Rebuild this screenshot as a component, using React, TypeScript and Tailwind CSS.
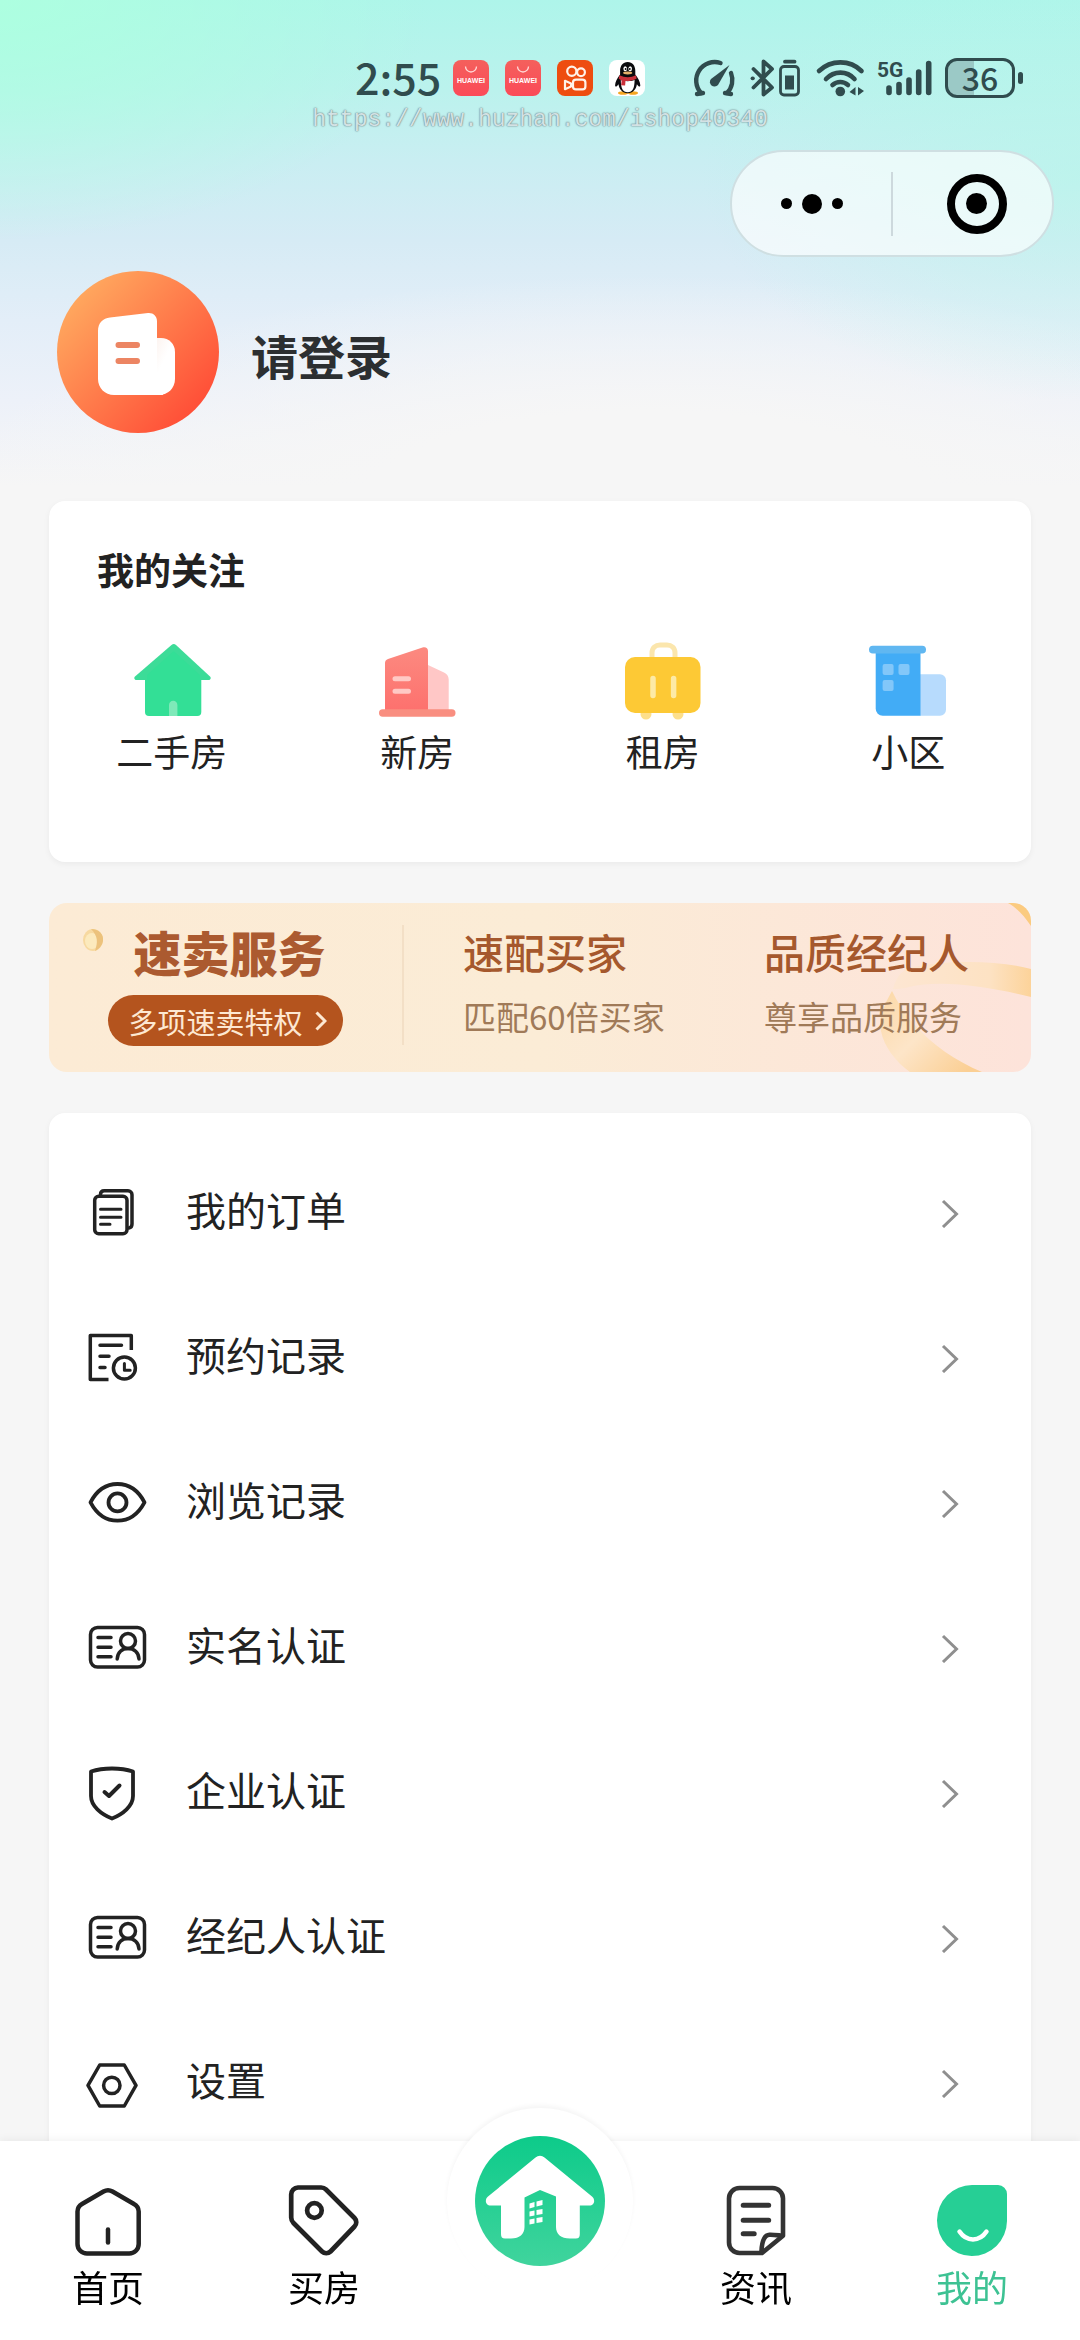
import React, { useState } from 'react';

type TabId = 'home' | 'buy' | 'publish' | 'news' | 'mine';

/* ---------- status bar icons ---------- */

function HuaweiIcon() {
  return (
    <svg className="w-9 h-9" viewBox="0 0 36 36" aria-hidden="true">
      <defs>
        <linearGradient id="hw" x1="0" y1="0" x2="0" y2="1">
          <stop offset="0" stopColor="#f4605c" />
          <stop offset="1" stopColor="#fb4a58" />
        </linearGradient>
      </defs>
      <rect width="36" height="36" rx="8" fill="url(#hw)" />
      <path d="M12.5 6.5a5.5 5.5 0 0 0 11 0" fill="none" stroke="#ffd9d6" strokeWidth="1.3" />
      <text
        x="18"
        y="23"
        textAnchor="middle"
        fill="#fff"
        className="font-['Liberation_Sans',sans-serif] text-[7px] font-bold"
      >
        HUAWEI
      </text>
    </svg>
  );
}

function KuaishouIcon() {
  return (
    <svg className="w-9 h-9" viewBox="0 0 36 36" aria-hidden="true">
      <rect width="36" height="36" rx="8" fill="#ee4d10" />
      <g fill="none" stroke="#fff3ea" strokeWidth="2.2" strokeLinejoin="round">
        <circle cx="14.8" cy="11.3" r="4.6" />
        <circle cx="24" cy="12.2" r="3.9" />
        <rect x="16" y="19.6" width="12.4" height="9.8" rx="3" />
        <path d="M8 20.8v8.4l6-2.6v-3.2z" />
      </g>
    </svg>
  );
}

function QQIcon() {
  return (
    <svg className="w-9 h-9" viewBox="0 0 36 36" aria-hidden="true">
      <rect width="36" height="36" rx="8" fill="#fff" />
      <ellipse cx="14" cy="33" rx="5" ry="1.8" fill="#f5a623" />
      <ellipse cx="24" cy="33" rx="5" ry="1.8" fill="#f5a623" />
      <path
        d="M18.7 2c4.8 0 7.6 3.8 7.6 9v3.5c2.8 3.6 5 7.5 5 10.8 0 1.7-1.4 2-3.4-1-.6 4.8-4 9-9.2 9s-8.6-4.2-9.2-9c-2 3-3.4 2.7-3.4 1 0-3.3 2.2-7.2 5-10.8V11c0-5.2 2.8-9 7.6-9z"
        fill="#0b0b0e"
      />
      <path d="M11.8 20c0 8 2 12.3 6.9 12.3S25.600 28 25.600 20c-4 1.600-9.800 1.600-13.800 0z" fill="#fff" />
      <path d="M10.500 15.300c5 2.500 11.500 2.500 16.400 0l.8 3.200c-3.200 1.900-7.200 2.700-11.200 2.600l-.4 4.500-4-.4.6-4.800c-1.400-.5-2.200-1.200-3-2z" fill="#c9303a" />
      <ellipse cx="16.2" cy="8.8" rx="1.8" ry="2.5" fill="#fff" />
      <ellipse cx="21.2" cy="8.8" rx="1.8" ry="2.5" fill="#fff" />
      <circle cx="16.6" cy="9" r=".9" />
      <circle cx="20.8" cy="9" r=".9" />
      <ellipse cx="18.7" cy="13" rx="4.6" ry="1.4" fill="#e5b06a" />
    </svg>
  );
}

function GaugeIcon() {
  return (
    <svg className="w-[46px] h-10" viewBox="0 0 46 40" fill="none" stroke="currentColor" strokeWidth="4.4" strokeLinecap="round" aria-hidden="true">
      <path d="M10 35A18.500 18.500 0 0 1 29.500 5" />
      <path d="M40 15a18.500 18.500 0 0 1-4 20" />
      <path d="M6 36l6-1M40 36l-6-1" />
      <path d="M38.500 7L27 27a4.600 4.600 0 1 1-7-6z" fill="currentColor" stroke="none" />
    </svg>
  );
}

function BluetoothIcon() {
  return (
    <svg className="w-[54px] h-10" viewBox="0 0 54 40" fill="none" stroke="currentColor" strokeWidth="3.8" strokeLinecap="round" strokeLinejoin="round" aria-hidden="true">
      <path d="M4.500 11L23 29.500 14.500 36.500V3.500L23 11 4.500 29.500" />
      <path d="M3.500 20.300h.4" />
      <rect x="31.5" y="8.5" width="18" height="28.5" rx="3.5" strokeWidth="2.8" />
      <path d="M36 3.700h9.500" />
      <rect x="36" y="17.5" width="9" height="14" fill="currentColor" stroke="none" />
    </svg>
  );
}

function WifiIcon() {
  return (
    <svg className="w-[50px] h-10" viewBox="0 0 50 40" fill="none" stroke="currentColor" strokeWidth="4.6" strokeLinecap="round" aria-hidden="true">
      <path d="M4 13C16 1.500 35 1.500 46.500 13" />
      <path d="M11 21c8-8.500 21-8.500 28.500 0" />
      <path d="M17.500 27c4.500-4 11-4 15.500 0" />
      <circle cx="25.3" cy="33.5" r="4.8" fill="currentColor" stroke="none" />
      <path d="M40.500 29v8.500L34.500 34zM43 29v8.500l6-4.500z" fill="currentColor" stroke="none" />
    </svg>
  );
}

function SignalIcon() {
  return (
    <svg className="w-14 h-10" viewBox="0 0 56 40" fill="none" stroke="currentColor" strokeWidth="5.6" strokeLinecap="round" aria-hidden="true">
      <text x="0" y="19" fill="currentColor" stroke="none" className="font-['Roboto',sans-serif] text-[21px] font-bold">
        5G
      </text>
      <path d="M12 30v4.500M22 26.500v8M32 22v12.500M41.700 14v20.500M51.700 5.500v29" />
    </svg>
  );
}

function StatusBar() {
  return (
    <div className="flex h-10 items-center justify-between pl-[355px] pr-[57px] text-[#304c4e]">
      <div className="flex items-center gap-4">
        <span className="w-[82px] pb-1 text-[43px] leading-10 font-medium whitespace-nowrap">2:55</span>
        <HuaweiIcon />
        <HuaweiIcon />
        <KuaishouIcon />
        <QQIcon />
      </div>
      <div className="flex items-center gap-3">
        <GaugeIcon />
        <BluetoothIcon />
        <WifiIcon />
        <SignalIcon />
        <div className="flex items-center gap-[3px]">
          <div className="flex h-10 w-[70px] items-center justify-center rounded-xl border-[3px] border-current bg-linear-to-r from-[#9bc9c6] from-40% to-transparent to-40% pb-[2px] text-[32px] leading-8 font-medium">
            36
          </div>
          <div className="h-3 w-[5px] rounded-full bg-current" />
        </div>
      </div>
    </div>
  );
}

/* ---------- 我的关注 icons ---------- */

function SecondHandIcon() {
  return (
    <svg className="size-[84px]" viewBox="0 0 84 84" aria-hidden="true">
      <path d="M15 32h56.300v39a4 4 0 0 1-4 4H19a4 4 0 0 1-4-4z" fill="#33df96" />
      <path d="M41.500 4a3.500 3.500 0 0 1 4.500 0l34 31.500c1.500 1.500.5 3.500-1.500 3.500H6.500c-2 0-3-2-1.500-3.500z" fill="#3cdc98" />
      <path d="M43.700 10L70 34v8H17v-8z" fill="#33df96" />
      <path d="M39 75V64a4.200 4.200 0 0 1 8.400 0v11z" fill="#7fe9b9" />
    </svg>
  );
}

function NewHouseIcon() {
  return (
    <svg className="size-[84px]" viewBox="0 0 84 84" aria-hidden="true">
      <defs>
        <linearGradient id="nh" x1="0" y1="0" x2="0" y2="1">
          <stop offset="0" stopColor="#fc8a80" />
          <stop offset="1" stopColor="#fd716e" />
        </linearGradient>
      </defs>
      <path d="M53 24l16 7.500a8 8 0 0 1 4.700 7V69H53z" fill="#ffc7c6" />
      <path d="M10 22c0-2 1-3.300 3-4l34.500-11.500c3-1 5.500.5 5.500 3.500v59H10z" fill="url(#nh)" />
      <rect x="4" y="68.3" width="76.5" height="7.5" rx="3.7" fill="#f98e80" />
      <path d="M20 37.700h13.500M20 50.300h13.500" stroke="#ffc9c5" strokeWidth="5" strokeLinecap="round" />
    </svg>
  );
}

function RentIcon() {
  return (
    <svg className="size-[84px]" viewBox="0 0 84 84" aria-hidden="true">
      <path d="M31 18v-6c0-5 3.500-8 8-8h7c4.500 0 8 3 8 8v6" fill="none" stroke="#fbe6ad" strokeWidth="5" />
      <circle cx="25" cy="73" r="5.5" fill="#fddf8b" />
      <circle cx="57" cy="73" r="5.5" fill="#fddf8b" />
      <rect x="4" y="16" width="75.5" height="56" rx="10" fill="#fdc935" />
      <path d="M32 37.500v17M52.600 37.500v17" stroke="#fdeaa6" strokeWidth="5.5" strokeLinecap="round" />
    </svg>
  );
}

function CommunityIcon() {
  return (
    <svg className="size-[84px]" viewBox="0 0 84 84" aria-hidden="true">
      <path d="M54 33.300h20a6 6 0 0 1 6 6v29.500a6 6 0 0 1-6 6H54z" fill="#b7dbfd" />
      <path d="M9.700 10h44.800v64.800H16.700a7 7 0 0 1-7-7z" fill="#42acf6" />
      <rect x="3" y="4.8" width="57" height="7.8" rx="3.8" fill="#60b7f1" />
      <g fill="#82c7f9">
        <rect x="16.6" y="23" width="11" height="11" rx="2" />
        <rect x="32.5" y="23" width="11" height="11" rx="2" />
        <rect x="16.6" y="39" width="11" height="11" rx="2" />
      </g>
    </svg>
  );
}

/* ---------- list icons ---------- */

function LineIcon({ children }: { children: React.ReactNode }) {
  return (
    <svg
      className="h-[60px] w-[62px] flex-shrink-0"
      viewBox="-2 0 62 60"
      fill="none"
      stroke="currentColor"
      strokeWidth="3.5"
      strokeLinecap="round"
      strokeLinejoin="round"
      aria-hidden="true"
    >
      {children}
    </svg>
  );
}

const OrderIcon = () => (
  <LineIcon>
    <rect x="6.7" y="14.3" width="32.3" height="37.4" rx="4" />
    <path d="M12.500 12.500c0-2.500 1.500-3.800 3.800-3.800H40a4 4 0 0 1 4 4V42c0 2.500-1 3.700-3 3.900" />
    <path d="M12.500 27.300H33M12.500 35.300H33M12.500 42.200h9.500" strokeWidth="3" />
  </LineIcon>
);

const BookingIcon = () => (
  <LineIcon>
    <path d="M43.300 23V8.500h-41v44H20.500" strokeLinecap="butt" />
    <path d="M12 18.200h21.500M12 29.200h9M12 40.500h5" />
    <circle cx="36.4" cy="41" r="11" />
    <path d="M36.400 36.500v6.700h5.800" strokeWidth="3" />
  </LineIcon>
);

const EyeIcon = () => (
  <LineIcon>
    <path d="M2.500 30.300C9 18 18.500 12 29.500 12S50 18 56.500 30.300C50 42.500 40.500 48.700 29.500 48.700S9 42.500 2.500 30.300z" strokeWidth="3.8" />
    <circle cx="29.5" cy="30.4" r="9" strokeWidth="3.8" />
  </LineIcon>
);

const IdCardIcon = () => (
  <LineIcon>
    <rect x="2.5" y="10.5" width="54" height="39.5" rx="7" />
    <path d="M10 20.500h13M10 30.300h13M10 39.800h13" />
    <circle cx="40" cy="24" r="7.5" />
    <path d="M29.200 42c.3-6.500 4.800-10.500 10.800-10.500S50.700 35.500 51 42" />
  </LineIcon>
);

const ShieldIcon = () => (
  <LineIcon>
    <path d="M3 9.500C15 5.500 33 5.500 45 9.500V34c0 10-10 18-21 22.500C13 52 3 44 3 34z" strokeWidth="3.8" />
    <path d="M16.500 30l4.500 4 10.500-10.500" strokeWidth="4" />
  </LineIcon>
);

const SettingIcon = () => (
  <LineIcon>
    <path d="M11.700 13h24.600L48 33.400 36.300 54H11.700L0 33.400z" />
    <circle cx="23.8" cy="33.4" r="8.2" />
  </LineIcon>
);

/* ---------- tab icons ---------- */

const HomeTabIcon = () => (
  <svg className="size-[72px]" viewBox="0 0 72 72" fill="none" stroke="#222" strokeWidth="4.5" strokeLinecap="round" strokeLinejoin="round" aria-hidden="true">
    <path d="M31.500 6.500a9 9 0 0 1 9 0L62 19a9 9 0 0 1 4.700 7.500V59a9.500 9.500 0 0 1-9.500 9.500H15A9.500 9.500 0 0 1 5.500 59V26.500A9 9 0 0 1 10 19z" />
    <path d="M36 44.500v13" />
  </svg>
);

const BuyTabIcon = () => (
  <svg className="size-[72px]" viewBox="0 0 72 72" fill="none" stroke="#222" strokeWidth="4.7" strokeLinejoin="round" aria-hidden="true">
    <path d="M10 2.500h23a7 7 0 0 1 5 2l28.500 28.500a6 6 0 0 1 0 8.500L42.500 66.500a6 6 0 0 1-8.500 0L5.500 38a8 8 0 0 1-2.300-5.500V9.500a7 7 0 0 1 6.800-7z" />
    <circle cx="26.4" cy="25.5" r="7.3" />
  </svg>
);

const NewsTabIcon = () => (
  <svg className="size-[72px]" viewBox="0 0 72 72" fill="none" stroke="#333" strokeWidth="4.6" strokeLinecap="round" strokeLinejoin="round" aria-hidden="true">
    <path d="M63 50.700V13.500A10.500 10.500 0 0 0 52.500 3h-33A10.500 10.500 0 0 0 9 13.500v44A10.500 10.500 0 0 0 19.500 68H42z" />
    <path d="M41.500 66c.5-11 3-16 8-16.300 4-.2 8.500.6 12 1" />
    <path d="M23.200 20.300h25.500M23.200 35.300h25.500M23.200 48.700h11" strokeWidth="5" />
  </svg>
);

const MineTabIcon = () => (
  <svg className="size-[72px]" viewBox="0 0 72 72" fill="none" aria-hidden="true">
    <path d="M36 0h26a9 9 0 0 1 9 9v27a35 35.500 0 1 1-35-36z" fill="#26cf95" />
    <path d="M23.500 46.500c7 10.500 20 10.500 27 0" stroke="#fff" strokeWidth="4.5" strokeLinecap="round" />
  </svg>
);

function PublishIcon() {
  return (
    <svg className="size-[130px]" viewBox="0 0 130 130" aria-hidden="true">
      <defs>
        <linearGradient id="pub" x1="0" y1="0" x2="0" y2="1">
          <stop offset="0" stopColor="#0dcb8a" />
          <stop offset="1" stopColor="#40d49d" />
        </linearGradient>
      </defs>
      <circle cx="65" cy="65" r="65" fill="url(#pub)" />
      <path
        d="M60.500 21.500a7 7 0 0 1 9 0L117 60.500c4 3.500 2 9-2.500 9h-9.700V98c0 3-1 4.500-4 4.500h-6C86 102.500 81 98 81 91V60.500L65 54 49.500 61.500V91c0 7-5 11.500-13.500 11.500h-6c-3 0-4-1.500-4-4.500V69.500h-10.500c-4.500 0-6.500-5.500-2.500-9z"
        fill="#fff"
      />
      <g fill="#fff">
        <path d="M54.500 67.500l5-1.500v5l-5 1.500zM61.500 65.500l6-1.500v5l-6 1.500zM54.500 75.500l5-1v5l-5 1zM61.500 74l6-1v5l-6 1zM54.500 83.500l5-1v5l-5 1zM61.500 82l6-1v5l-6 1z" />
      </g>
    </svg>
  );
}

/* ---------- data ---------- */

const follows = [
  { label: '二手房', icon: SecondHandIcon },
  { label: '新房', icon: NewHouseIcon },
  { label: '租房', icon: RentIcon },
  { label: '小区', icon: CommunityIcon },
];

const menuItems = [
  { label: '我的订单', icon: OrderIcon },
  { label: '预约记录', icon: BookingIcon },
  { label: '浏览记录', icon: EyeIcon },
  { label: '实名认证', icon: IdCardIcon },
  { label: '企业认证', icon: ShieldIcon },
  { label: '经纪人认证', icon: IdCardIcon },
  { label: '设置', icon: SettingIcon },
];

/* ---------- sections ---------- */

function Capsule() {
  return (
    <div className="flex h-[107px] w-[324px] items-center rounded-full border-2 border-[#cfdfe2] bg-white/65">
      <button type="button" aria-label="更多" className="flex h-full flex-1 items-center justify-center gap-[10px]">
        <span className="size-[11px] rounded-full bg-black" />
        <span className="size-5 rounded-full bg-black" />
        <span className="size-[11px] rounded-full bg-black" />
      </button>
      <span className="h-16 w-[2px] bg-[#cdd9dd]" />
      <button type="button" aria-label="关闭" className="flex h-full flex-1 items-center justify-center">
        <span className="ml-2 flex size-[60px] items-center justify-center rounded-full border-8 border-black">
          <span className="size-[21px] rounded-full bg-black" />
        </span>
      </button>
    </div>
  );
}

function Avatar() {
  return (
    <svg className="size-[162px]" viewBox="0 0 162 162" aria-hidden="true">
      <defs>
        <linearGradient id="av" x1="0.1" y1="0.15" x2="0.85" y2="0.85">
          <stop offset="0" stopColor="#ffa95f" />
          <stop offset="1" stopColor="#ff5038" />
        </linearGradient>
        <linearGradient id="avFold" x1="0" y1="0" x2="1" y2="1">
          <stop offset="0" stopColor="#fbeee8" />
          <stop offset="0.5" stopColor="#fff" />
        </linearGradient>
      </defs>
      <circle cx="81" cy="81" r="81" fill="url(#av)" />
      <path d="M95 67h9c8 0 14 6 14 14v27c0 9-7 16-16 16H90z" fill="url(#avFold)" />
      <path d="M41 60c0-8 5-13 12-13.500L91 42c5-.5 9 3 9 8v50l6 24H57c-9 0-16-7-16-16z" fill="#fff" />
      <path d="M61.500 74h18.500M61.500 90h18.500" stroke="#ec8563" strokeWidth="6" strokeLinecap="round" />
    </svg>
  );
}

function PromoBanner() {
  return (
    <a
      href="#promo"
      className="relative mt-[41px] flex h-[169px] overflow-hidden rounded-[18px] bg-linear-to-r from-[#fcebd5] via-[#fbecd6] to-[#fde3da]"
    >
      {/* ribbon decoration */}
      <svg className="absolute inset-y-0 right-0 h-full w-[160px]" viewBox="822 0 160 169" aria-hidden="true">
        <defs>
          <linearGradient id="rb1" x1="0" y1="0" x2="1" y2="0">
            <stop offset="0" stopColor="#fde6d2" />
            <stop offset="0.7" stopColor="#fde2c3" />
            <stop offset="1" stopColor="#fcd39a" />
          </linearGradient>
          <linearGradient id="rb2" x1="0" y1="0" x2="1" y2="0.8">
            <stop offset="0" stopColor="#fcd8a6" />
            <stop offset="0.5" stopColor="#fde5c8" />
            <stop offset="1" stopColor="#fbcf94" />
          </linearGradient>
        </defs>
        <path d="M959 0h23v23c-7-10-14-18-23-23z" fill="#fbcb80" />
        <path d="M844 86c4-14 10-20 20-22 30-6 80-8 118 2v28c-40-10-90-18-122-10-8 2-12 2-16 2z" fill="url(#rb1)" />
        <path d="M843 88c-8 14-14 28-11 40 3 16 15 31 29 41h72c-26-11-50-27-69-49-9-10-15-20-21-32z" fill="url(#rb2)" />
      </svg>
      <svg className="absolute top-[24px] left-[33px] h-7 w-6" viewBox="0 0 24 28" aria-hidden="true">
        <ellipse cx="11" cy="13" rx="10" ry="11" fill="#f7d9a0" />
        <ellipse cx="10" cy="14" rx="7" ry="8" fill="#fceabd" />
        <path d="M9 2c8 0 13 5 12 12-1 5-4 8-8 10 3-9 3-15-4-22z" fill="#ecc27c" />
      </svg>

      <div className="relative flex w-[353px] flex-col items-center pt-[18px]">
        <span className="pl-2 text-[48px] leading-[60px] font-black text-[#ab5a30]">速卖服务</span>
        <span className="mt-[14px] flex h-[51px] w-[235px] items-center justify-center gap-3 rounded-full bg-[#b4541e] pl-1 text-[29px] leading-8 text-[#fde8d2]">
          多项速卖特权
          <svg className="h-5 w-3" viewBox="0 0 12 20" fill="none" stroke="currentColor" strokeWidth="3" aria-hidden="true">
            <path d="M1.500 1.500l8.500 8.500-8.500 8.500" />
          </svg>
        </span>
      </div>
      <span className="mt-[22px] h-[120px] w-[2px] bg-[#f3dfc6]" />
      <div className="relative flex flex-1 justify-between pt-6 pr-[62px] pl-[59px]">
        <div className="flex flex-col gap-[22px]">
          <span className="text-[41px] leading-[48px] font-medium text-[#a5582d]">速配买家</span>
          <span className="text-[33px] leading-[38px] text-[#a07a58]">匹配60倍买家</span>
        </div>
        <div className="flex flex-col gap-[22px]">
          <span className="text-[41px] leading-[48px] font-medium text-[#a5582d]">品质经纪人</span>
          <span className="text-[33px] leading-[38px] text-[#a07a58]">尊享品质服务</span>
        </div>
      </div>
    </a>
  );
}

interface TabButtonProps {
  label: string;
  icon: React.ComponentType;
  active: boolean;
  onClick: () => void;
}

function TabButton({ label, icon: Icon, active, onClick }: TabButtonProps) {
  return (
    <button type="button" onClick={onClick} className="flex flex-1 flex-col items-center gap-2 pt-[44px]">
      <Icon />
      <span className={`text-[36px] leading-[42px] ${active ? 'text-[#3dc293]' : 'text-black'}`}>{label}</span>
    </button>
  );
}

function TabBar() {
  const [active, setActive] = useState<TabId>('mine');

  return (
    <nav className="fixed inset-x-0 bottom-0 flex h-[199px] bg-white shadow-[0_-2px_8px_rgba(0,0,0,0.05)]">
      <TabButton label="首页" icon={HomeTabIcon} active={active === 'home'} onClick={() => setActive('home')} />
      <TabButton label="买房" icon={BuyTabIcon} active={active === 'buy'} onClick={() => setActive('buy')} />
      <div className="flex flex-1 justify-center">
        <button
          type="button"
          aria-label="发布"
          onClick={() => setActive('publish')}
          className="-mt-[33px] flex size-[186px] items-center justify-center rounded-full bg-white shadow-[0_-3px_4px_rgba(0,0,0,0.04)]"
        >
          <PublishIcon />
        </button>
      </div>
      <TabButton label="资讯" icon={NewsTabIcon} active={active === 'news'} onClick={() => setActive('news')} />
      <TabButton label="我的" icon={MineTabIcon} active={active === 'mine'} onClick={() => setActive('mine')} />
    </nav>
  );
}

export default function App() {
  return (
    <div className="min-h-screen bg-[#f6f6f6] font-['Noto_Sans_CJK_SC',sans-serif] text-[#222]">
      <header className="bg-[radial-gradient(ellipse_40%_48%_at_0%_0%,#adffe0_0%,#adffe000_100%),radial-gradient(ellipse_35%_45%_at_100%_35%,#b4f7e9a0_0%,#b4f7e900_100%),radial-gradient(ellipse_65%_45%_at_60%_100%,#f6f6f6_40%,#f6f6f600_100%),linear-gradient(180deg,#aef5ea_0%,#bbf2ed_18%,#c9eef2_32%,#d6ebf5_48%,#e3eef8_64%,#edf1f9_80%,#f6f6f6_97%)] pt-[58px] pb-[68px]">
        <StatusBar />
        <p className="mt-2 text-center font-['Liberation_Mono',monospace] text-[23px] leading-7 text-[#d3e2e4] [text-shadow:0_0_1px_#6f8388,0_0_2px_#6f8388]">
          https://www.huzhan.com/ishop40340
        </p>
        <div className="mt-4 flex justify-end pr-[26px]">
          <Capsule />
        </div>
        <div className="mt-[14px] flex items-center gap-[32px] pl-[57px]">
          <Avatar />
          <a href="#login" className="pt-[6px] text-[47px] leading-[56px] font-bold text-[#2c2f31]">
            请登录
          </a>
        </div>
      </header>

      <main className="px-[49px] pb-[160px]">
        <section className="rounded-2xl bg-white pt-11 pb-[85px] shadow-[0_2px_6px_rgba(0,0,0,0.05)]">
          <h2 className="px-12 text-[37px] leading-[48px] font-bold">我的关注</h2>
          <div className="mt-12 grid grid-cols-4">
            {follows.map((item) => (
              <a key={item.label} href="#follow" className="flex flex-col items-center">
                <item.icon />
                <span className="mt-[2px] pb-[2px] text-[37px] leading-[48px]">{item.label}</span>
              </a>
            ))}
          </div>
        </section>

        <PromoBanner />

        <section className="mt-[41px] rounded-2xl bg-white pt-[26px] pb-6 shadow-[0_2px_6px_rgba(0,0,0,0.05)]">
          {menuItems.map((item) => (
            <a key={item.label} href="#menu" className="flex h-[145px] items-center gap-[38px] pr-[72px] pl-[37px]">
              <item.icon />
              <span className="flex-1 pb-[6px] text-[40px] leading-[48px]">{item.label}</span>
              <svg className="h-8 w-[18px]" viewBox="0 0 18 32" fill="none" stroke="#8f8f8f" strokeWidth="3" aria-hidden="true">
                <path d="M2 5l13.500 13L2 31" />
              </svg>
            </a>
          ))}
        </section>
      </main>

      <TabBar />
    </div>
  );
}
